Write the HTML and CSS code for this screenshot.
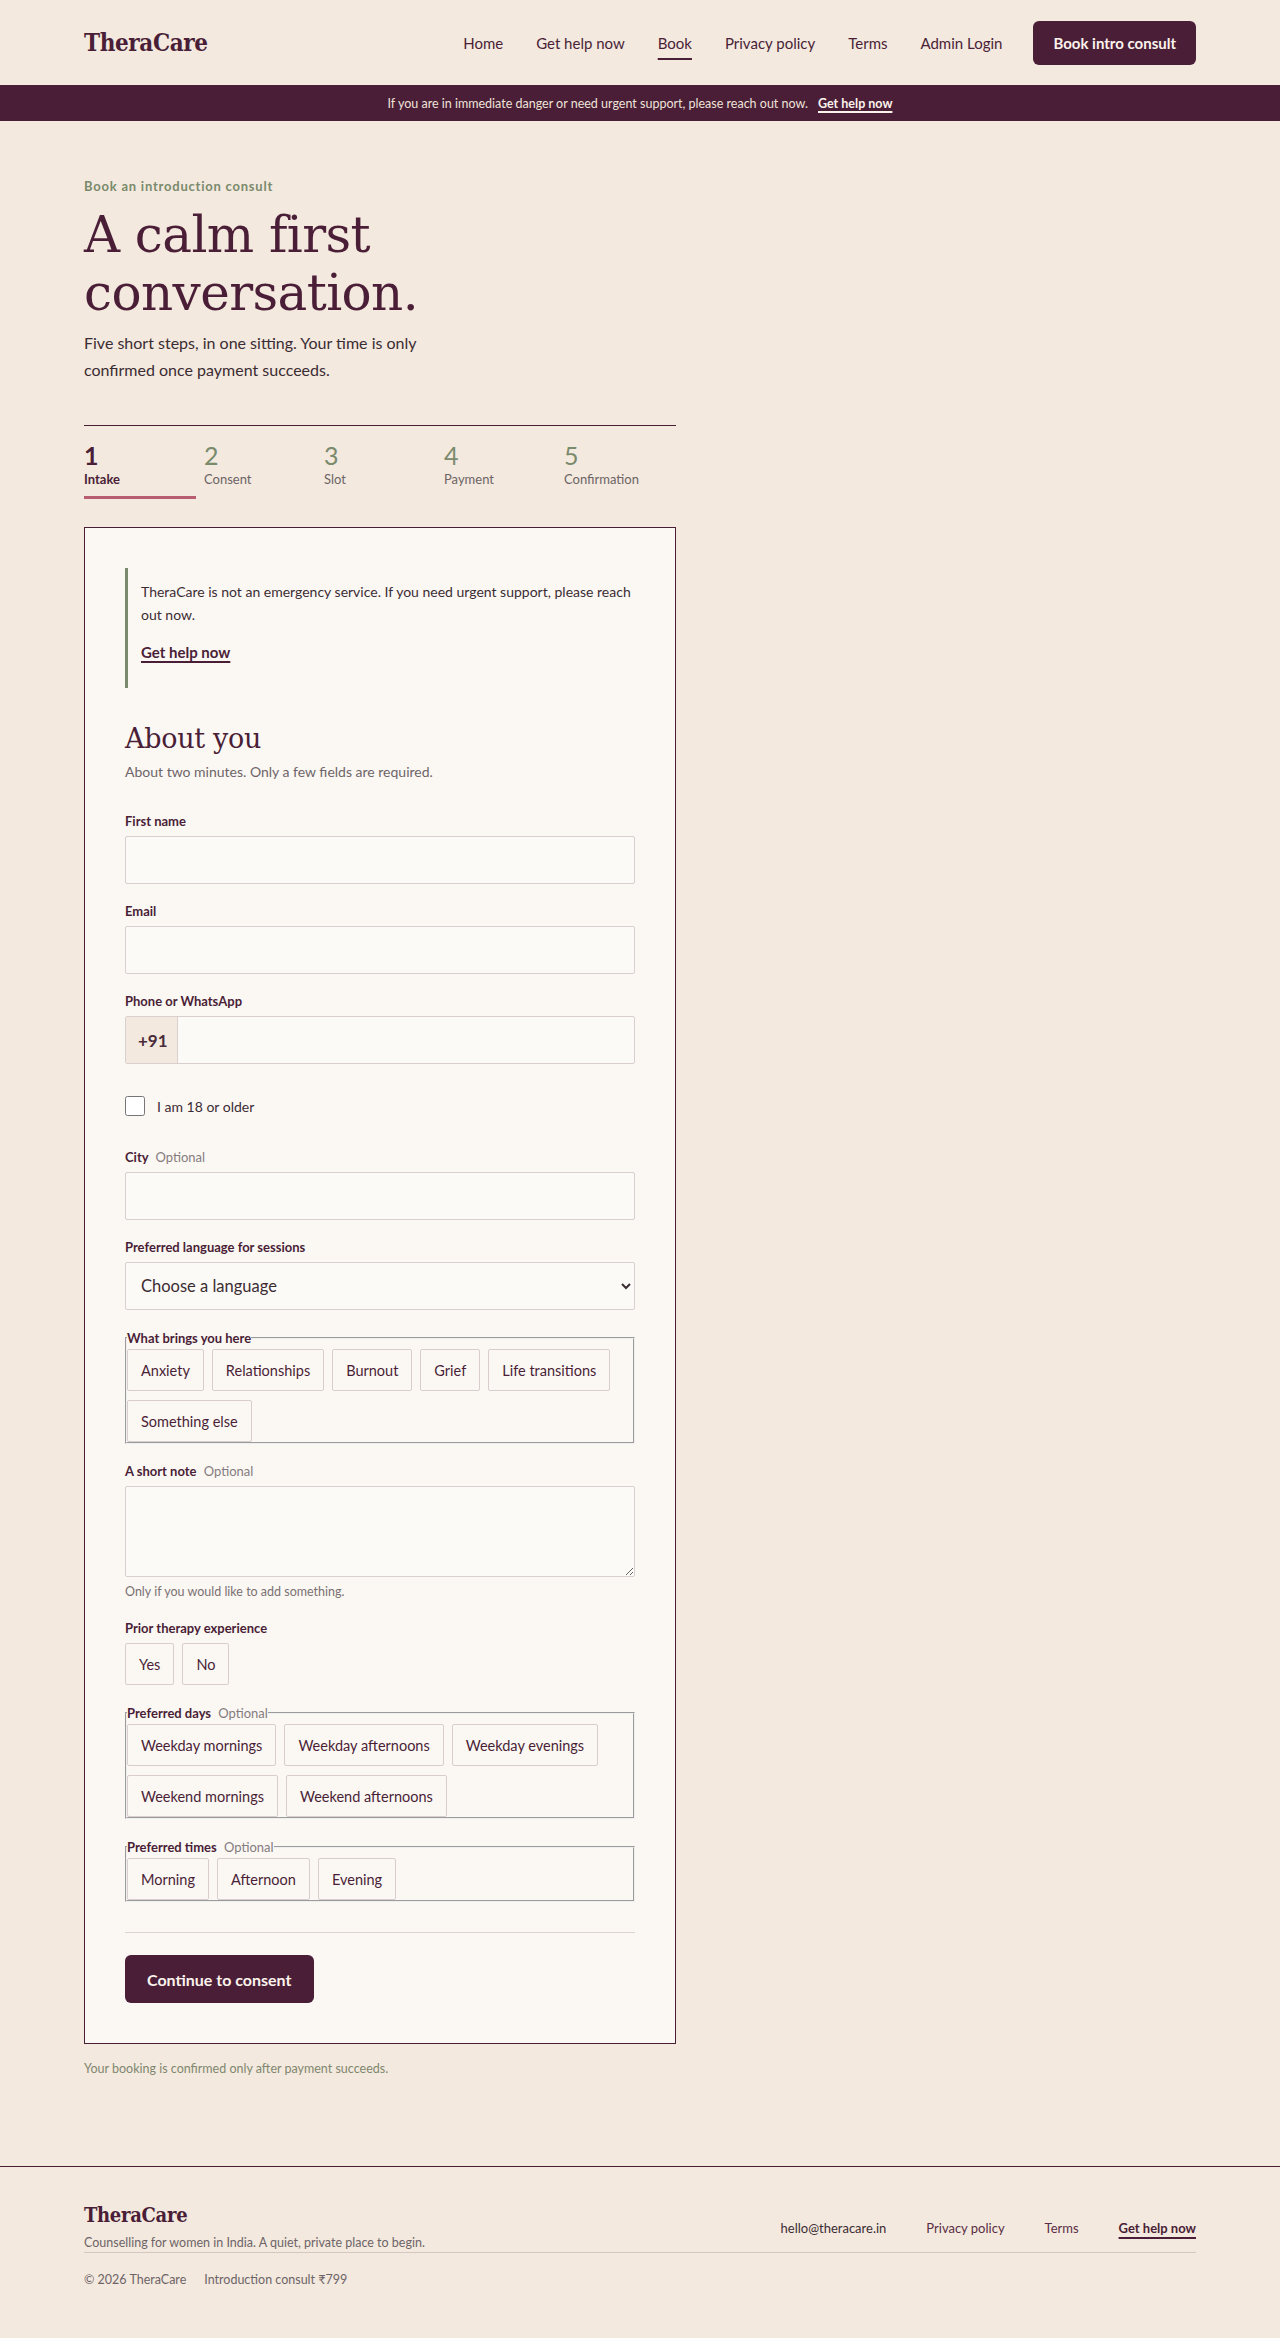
FILE: index.html
```html
<!DOCTYPE html>
<html lang="en">
<head>
    <meta charset="UTF-8">
    <meta name="viewport" content="width=device-width, initial-scale=1.0">
    <title>Book an introduction consult - TheraCare</title>
    <link rel="stylesheet" href="styles.css">
</head>
<body>
    <header class="site-header">
        <div class="container header-inner">
            <a class="logo" href="#">TheraCare</a>
            <nav class="main-nav">
                <a href="#">Home</a>
                <a href="#">Get help now</a>
                <a href="#" class="active">Book</a>
                <a href="#">Privacy policy</a>
                <a href="#">Terms</a>
                <a href="#">Admin Login</a>
                <a href="#" class="btn btn-header">Book intro consult</a>
            </nav>
        </div>
    </header>

    <div class="urgent-bar">
        <span>If you are in immediate danger or need urgent support, please reach out now.</span>
        <a href="#">Get help now</a>
    </div>

    <main class="container page">
        <section class="intro">
            <p class="eyebrow">Book an introduction consult</p>
            <h1>A calm first conversation.</h1>
            <p class="lede">Five short steps, in one sitting. Your time is only confirmed once payment succeeds.</p>
        </section>

        <ol class="steps">
            <li class="active"><span class="step-num">1</span><span class="step-label">Intake</span></li>
            <li><span class="step-num">2</span><span class="step-label">Consent</span></li>
            <li><span class="step-num">3</span><span class="step-label">Slot</span></li>
            <li><span class="step-num">4</span><span class="step-label">Payment</span></li>
            <li><span class="step-num">5</span><span class="step-label">Confirmation</span></li>
        </ol>

        <form class="card" onsubmit="return false;">
            <div class="callout">
                <p>TheraCare is not an emergency service. If you need urgent support, please reach out now.</p>
                <p class="callout-link"><a href="#">Get help now</a></p>
            </div>

            <h2>About you</h2>
            <p class="form-sub">About two minutes. Only a few fields are required.</p>

            <div class="fields">
                <div class="field">
                    <label for="first-name">First name</label>
                    <input type="text" id="first-name" class="text-input">
                </div>

                <div class="field">
                    <label for="email">Email</label>
                    <input type="email" id="email" class="text-input">
                </div>

                <div class="field">
                    <label for="phone">Phone or WhatsApp</label>
                    <div class="phone-group">
                        <span class="phone-prefix">+91</span>
                        <input type="tel" id="phone">
                    </div>
                </div>

                <label class="check-row">
                    <input type="checkbox">
                    <span>I am 18 or older</span>
                </label>

                <div class="field">
                    <label for="city">City <span class="optional">Optional</span></label>
                    <input type="text" id="city" class="text-input">
                </div>

                <div class="field">
                    <label for="language">Preferred language for sessions</label>
                    <select id="language" class="text-input select-input">
                        <option>Choose a language</option>
                        <option>English</option>
                        <option>Hindi</option>
                        <option>Tamil</option>
                        <option>Bengali</option>
                    </select>
                </div>

                <fieldset class="field chip-set">
                    <legend>What brings you here</legend>
                    <div class="chips">
                        <button type="button" class="chip">Anxiety</button>
                        <button type="button" class="chip">Relationships</button>
                        <button type="button" class="chip">Burnout</button>
                        <button type="button" class="chip">Grief</button>
                        <button type="button" class="chip">Life transitions</button>
                        <button type="button" class="chip">Something else</button>
                    </div>
                </fieldset>

                <div class="field">
                    <label for="note">A short note <span class="optional">Optional</span></label>
                    <textarea id="note" class="text-input note-input"></textarea>
                    <p class="hint">Only if you would like to add something.</p>
                </div>

                <div class="field">
                    <label>Prior therapy experience</label>
                    <div class="chips">
                        <button type="button" class="chip">Yes</button>
                        <button type="button" class="chip">No</button>
                    </div>
                </div>

                <fieldset class="field chip-set">
                    <legend>Preferred days <span class="optional">Optional</span></legend>
                    <div class="chips">
                        <button type="button" class="chip">Weekday mornings</button>
                        <button type="button" class="chip">Weekday afternoons</button>
                        <button type="button" class="chip">Weekday evenings</button>
                        <button type="button" class="chip">Weekend mornings</button>
                        <button type="button" class="chip">Weekend afternoons</button>
                    </div>
                </fieldset>

                <fieldset class="field chip-set">
                    <legend>Preferred times <span class="optional">Optional</span></legend>
                    <div class="chips">
                        <button type="button" class="chip">Morning</button>
                        <button type="button" class="chip">Afternoon</button>
                        <button type="button" class="chip">Evening</button>
                    </div>
                </fieldset>
            </div>

            <div class="form-actions">
                <button type="submit" class="btn btn-primary">Continue to consent</button>
            </div>
        </form>

        <p class="fine-print">Your booking is confirmed only after payment succeeds.</p>
    </main>

    <footer class="site-footer">
        <div class="container">
            <div class="footer-top">
                <div>
                    <div class="footer-logo">TheraCare</div>
                    <p class="tagline">Counselling for women in India. A quiet, private place to begin.</p>
                </div>
                <nav class="footer-nav">
                    <a href="#" class="mail">hello@theracare.in</a>
                    <a href="#">Privacy policy</a>
                    <a href="#">Terms</a>
                    <a href="#" class="help">Get help now</a>
                </nav>
            </div>
            <div class="footer-bottom">
                <span>&copy; 2026 TheraCare</span>
                <span>Introduction consult &#8377;799</span>
            </div>
        </div>
    </footer>
</body>
</html>
```

FILE: styles.css
```css
* {
    box-sizing: border-box;
}
body {
    margin: 0;
    padding: 0;
    background-color: #f3e9de;
    color: #3b2c33;
    font-family: Lato, "Noto Sans", "DejaVu Sans", sans-serif;
}
a {
    color: inherit;
    text-decoration: none;
}
.container {
    max-width: 1160px;
    margin: 0 auto;
    padding: 0 24px;
}

/* header */
.header-inner {
    height: 85px;
    display: flex;
    align-items: center;
    justify-content: space-between;
}
.logo {
    font-family: "DejaVu Serif", serif;
    font-size: 24px;
    font-weight: 700;
    font-stretch: condensed;
    letter-spacing: -0.4px;
    color: #4a1e37;
}
.main-nav {
    display: flex;
    align-items: center;
    gap: 33px;
}
.main-nav a {
    font-size: 15px;
    color: #4a1e37;
}
.main-nav a.active {
    text-decoration: underline;
    text-decoration-thickness: 2px;
    text-underline-offset: 9px;
}
.btn {
    display: inline-flex;
    align-items: center;
    justify-content: center;
    border: none;
    border-radius: 6px;
    background-color: #4a1e37;
    color: #fbf3ec;
    font-family: inherit;
    font-weight: 700;
    cursor: pointer;
}
.main-nav .btn-header {
    height: 44px;
    padding: 0 20px;
    color: #fbf3ec;
    font-size: 15px;
    margin-left: -2px;
}

.urgent-bar {
    height: 36px;
    background-color: #4a1e37;
    color: #efe3d8;
    font-size: 12.5px;
    display: flex;
    align-items: center;
    justify-content: center;
    gap: 10px;
}
.urgent-bar a {
    font-weight: 700;
    color: #fbf3ec;
    text-decoration: underline;
    text-decoration-thickness: 1.5px;
    text-underline-offset: 3px;
}

/* intro */
.page {
    padding-top: 56px;
    padding-bottom: 88px;
}
.page > * {
    max-width: 592px;
}
.eyebrow {
    margin: 0;
    font-size: 13px;
    line-height: 18px;
    font-weight: 700;
    letter-spacing: 0.06em;
    color: #7a8a6c;
}
.intro h1 {
    margin: 11px 0 0;
    font-family: "DejaVu Serif", serif;
    font-weight: normal;
    font-size: 50px;
    line-height: 58px;
    letter-spacing: -0.6px;
    color: #4a1e37;
    max-width: 480px;
}
.lede {
    margin: 7px 0 0;
    font-size: 16px;
    line-height: 27px;
    max-width: 340px;
    color: #3b2c33;
}

/* steps */
.steps {
    list-style: none;
    margin: 42px 0 0;
    padding: 0;
    border-top: 1px solid #4a1e37;
    display: grid;
    grid-template-columns: repeat(5, 1fr);
    gap: 8px;
}
.steps li {
    padding: 14px 0 8px;
    border-bottom: 3px solid transparent;
}
.step-num {
    display: block;
    font-size: 25px;
    line-height: 30px;
    color: #7a8a6c;
}
.step-label {
    display: block;
    font-size: 13px;
    line-height: 18px;
    color: #6d6466;
}
.steps li.active {
    border-bottom-color: #b95d73;
}
.steps li.active .step-num {
    color: #4a1e37;
    font-weight: 700;
}
.steps li.active .step-label {
    color: #4a1e37;
    font-weight: 700;
}

/* form card */
.card {
    margin-top: 28px;
    background-color: #fbf8f3;
    border: 1px solid #4a1e37;
    padding: 40px;
}
.callout {
    border-left: 3px solid #7a8a6c;
    padding: 12px 0 24px 13px;
}
.callout p {
    margin: 0;
    font-size: 14px;
    line-height: 23px;
    color: #3b2c33;
}
.callout .callout-link {
    margin-top: 15px;
}
.callout-link a {
    font-size: 15px;
    font-weight: 700;
    color: #4a1e37;
    text-decoration: underline;
    text-decoration-thickness: 1.5px;
    text-underline-offset: 3px;
}
.card h2 {
    margin: 35px 0 0;
    font-family: "DejaVu Serif", serif;
    font-weight: normal;
    font-size: 27px;
    line-height: 1.2;
    letter-spacing: -0.3px;
    color: #4a1e37;
}
.form-sub {
    margin: 6px 0 0;
    font-size: 14px;
    line-height: 22px;
    color: #6e6468;
}
.fields {
    margin-top: 29px;
}
.field {
    margin: 0 0 18px;
}
.field > label,
.chip-set legend {
    display: block;
    font-size: 13px;
    line-height: 18px;
    font-weight: 700;
    color: #4a1e37;
    margin-bottom: 6px;
}
.optional {
    font-weight: 400;
    color: #857b7f;
    margin-left: 4px;
}
.text-input {
    display: block;
    width: 100%;
    height: 48px;
    padding: 0 16px;
    border: 1px solid #dacfd0;
    border-radius: 2px;
    background-color: #fcfaf6;
    font-family: inherit;
    font-size: 17px;
    color: #3b2c33;
}
.select-input {
    padding-left: 11px;
    padding-right: 8px;
    font-size: 16.5px;
}
.note-input {
    height: 91px;
    padding: 12px 16px;
    resize: vertical;
}
.hint {
    margin: 6px 0 0;
    font-size: 12.5px;
    line-height: 18px;
    color: #7a7074;
}
.phone-group {
    display: flex;
    height: 48px;
    border: 1px solid #dacfd0;
    border-radius: 2px;
    background-color: #fcfaf6;
    overflow: hidden;
}
.phone-prefix {
    display: flex;
    align-items: center;
    padding: 0 12px;
    width: 52px;
    background-color: #f3e9de;
    border-right: 1px solid #dacfd0;
    font-size: 17px;
    font-weight: 700;
    color: #4a2b3a;
}
.phone-group input {
    flex: 1;
    border: none;
    background: transparent;
    font-family: inherit;
    font-size: 17px;
    padding: 0 16px;
}
.check-row {
    display: flex;
    align-items: center;
    gap: 12px;
    min-height: 48px;
    margin-bottom: 18px;
    font-size: 14px;
    color: #3b2c33;
}
.check-row input {
    width: 20px;
    height: 20px;
    margin: 0;
}

/* chip groups */
.chip-set {
    padding: 0;
    min-width: 0;
}
.chip-set legend {
    padding: 0;
    line-height: 20px;
    margin: 0;
}
.chips {
    display: flex;
    flex-wrap: wrap;
    gap: 9px 8px;
}
.chip-set .chips {
    padding-top: 1px;
}
.chip {
    height: 42px;
    padding: 0 13px;
    border: 1px solid #d9cdce;
    border-radius: 2px;
    background-color: #fbf8f3;
    font-family: inherit;
    font-size: 14.5px;
    color: #4a1e37;
    cursor: pointer;
}

.form-actions {
    margin-top: 30px;
    padding-top: 22px;
    border-top: 1px solid #ddd3d0;
}
.btn-primary {
    height: 48px;
    padding: 0 22px;
    font-size: 16px;
}
.fine-print {
    margin: 16px 0 0;
    font-size: 12.5px;
    line-height: 18px;
    color: #80876f;
}

/* footer */
.site-footer {
    border-top: 1px solid #4a1e37;
}
.footer-top {
    display: flex;
    align-items: center;
    justify-content: space-between;
    padding-top: 36px;
    border-bottom: 1px solid #d3c8bf;
}
.footer-logo {
    font-family: "DejaVu Serif", serif;
    font-size: 20px;
    font-weight: 700;
    font-stretch: condensed;
    line-height: 24px;
    letter-spacing: -0.3px;
    color: #4a1e37;
}
.tagline {
    margin: 7px 0 0;
    font-size: 12.5px;
    line-height: 18px;
    color: #6e6468;
}
.footer-nav {
    display: flex;
    gap: 40px;
    font-size: 13px;
}
.footer-nav a {
    color: #5a2d45;
}
.footer-nav a.mail {
    color: #3b2c33;
}
.footer-nav a.help {
    font-weight: 700;
    color: #4a1e37;
    text-decoration: underline;
    text-decoration-thickness: 1.5px;
    text-underline-offset: 4px;
}
.footer-bottom {
    display: flex;
    gap: 18px;
    padding: 18px 0 48px;
    font-size: 12.5px;
    line-height: 18px;
    color: #6e6468;
}
```
